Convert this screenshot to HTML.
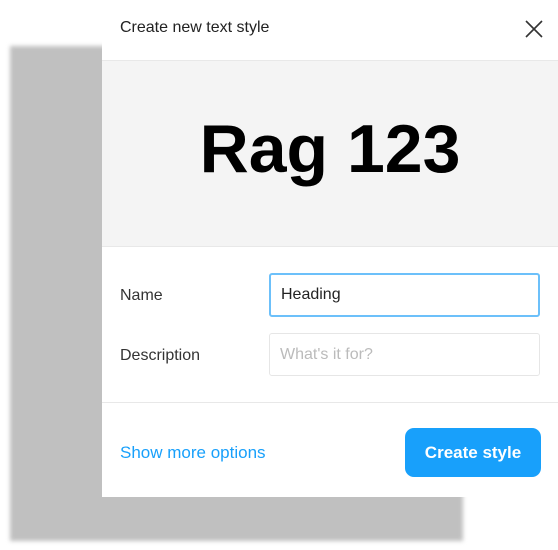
<!DOCTYPE html>
<html><head><style>
body{margin:0;width:558px;height:550px;background:#fff;position:relative;overflow:hidden;font-family:"Liberation Sans",sans-serif}
.sh{position:absolute;left:10px;top:46px;width:453px;height:495px;background:#c0c0c0;filter:blur(2px)}
.dlg{position:absolute;left:102px;top:0;width:456px;height:497px;background:#fff}
.t{position:absolute;left:18px;top:19px;font-size:16px;color:#222}
.x{position:absolute;left:422px;top:19px}
.pv{position:absolute;left:0;top:60px;width:456px;height:187px;background:#f4f4f4;border-top:1px solid #e8e8e8;border-bottom:1px solid #e8e8e8;box-sizing:border-box}
.big{position:absolute;left:0;right:0;top:49px;text-align:center;font-size:68px;font-weight:bold;color:#000;letter-spacing:0px}
.lb{position:absolute;left:18px;font-size:16px;color:#333}
.in{position:absolute;left:167px;width:271px;box-sizing:border-box;border-radius:3px;font-size:16px;padding-left:10px}
.ln{position:absolute;left:0;top:402px;width:456px;height:1px;background:#e8e8e8}
.lk{position:absolute;left:18px;top:443px;font-size:17px;color:#18a0fb}
.bt{position:absolute;left:303px;top:428px;width:136px;height:49px;background:#18a0fb;border-radius:9px;color:#fff;font-size:17px;font-weight:bold;text-align:center;line-height:49px}
</style></head><body>
<div class="sh"></div>
<div class="dlg">
<div class="t">Create new text style</div>
<svg class="x" width="20" height="20" viewBox="0 0 20 20"><path d="M2 2L18 18M18 2L2 18" stroke="#333" stroke-width="1.6"/></svg>
<div class="pv"><div class="big">Rag 123</div></div>
<div class="lb" style="top:287px">Name</div>
<div class="in" style="top:273px;height:44px;border:2px solid #6cc0fa;line-height:40px;color:#222">Heading</div>
<div class="lb" style="top:347px">Description</div>
<div class="in" style="top:333px;height:43px;border:1px solid #e6e6e6;line-height:41px;color:#bbb">What's it for?</div>
<div class="ln"></div>
<div class="lk">Show more options</div>
<div class="bt">Create style</div>
</div>
</body></html>
